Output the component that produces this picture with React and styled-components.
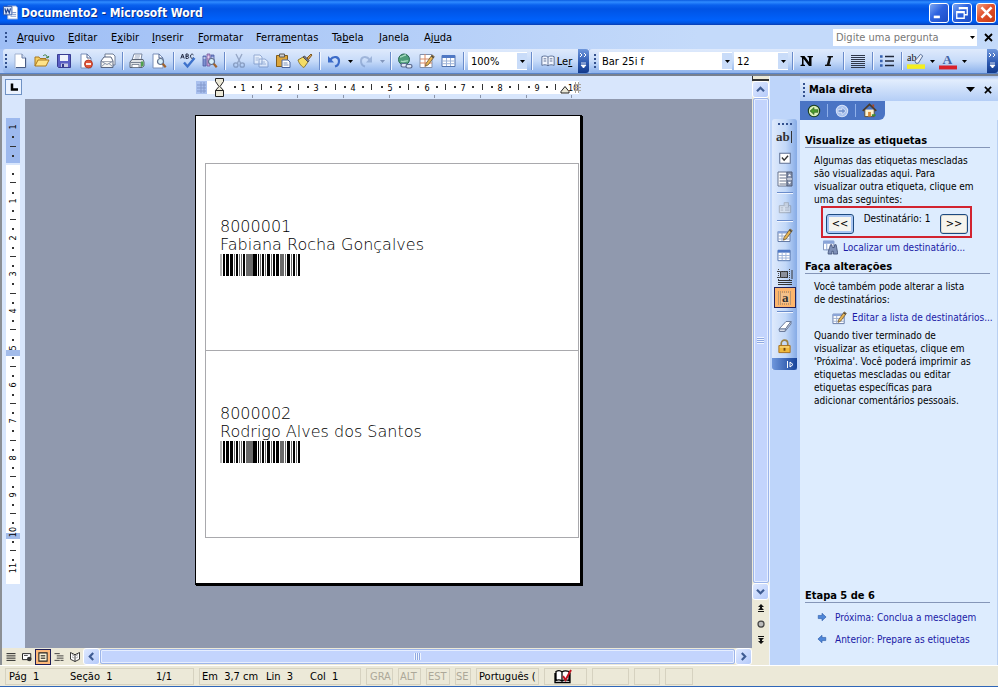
import React from "react";
import styled, { createGlobalStyle } from "styled-components";

const UI = '"DejaVu Sans Condensed", "Noto Sans", sans-serif';

const Global = createGlobalStyle`
  *, *::before, *::after { box-sizing: border-box; }
  html, body, #root { height: 100%; }
  body { margin: 0; background: #fff; font: 11px/13px ${UI}; color: #000; }
  button, input { font: inherit; color: inherit; padding: 0; border: 0; background: none; margin: 0; }
  a { color: #1a1aa6; text-decoration: none; }
  h2, p { margin: 0; }
  svg { display: block; flex: none; }
`;

const Window = styled.main`
  display: flex; flex-direction: column; min-height: 100vh;
  margin-right: 2px; border-bottom: 1px solid #2f66b8; background: #ece9d8; overflow: hidden;
`;
const TitleBar = styled.header`
  display: flex; align-items: center; height: 25px; padding: 0 2px 0 3px; gap: 3px;
  background: linear-gradient(#0a5be0 0, #2f8bff 2px, #0a62ee 5px, #0053e4 9px, #0061fb 20px, #0054e0 23px, #0a3cb0 25px);
`;
const Title = styled.h1`
  flex: 1; margin: 0; color: #fff; font: bold 12px/16px "DejaVu Sans Condensed", "Noto Sans", sans-serif;
  text-shadow: 1px 1px #0a2f8a;
`;
const WinButton = styled.button`
  width: 20px; height: 20px; border: 1px solid #fff; border-radius: 3px; display: grid; place-items: center;
  margin-left: ${(p) => (p.$close ? 1 : 0)}px;
  background: ${(p) => (p.$close
    ? "linear-gradient(135deg, #f0a084, #e2512c 45%, #c63a12)"
    : "linear-gradient(135deg, #7fa8f2, #2c62e0 45%, #1c4cc4)")};
`;
const MenuBar = styled.nav`
  display: flex; align-items: center; height: 24px; padding-left: 5px;
  background: linear-gradient(90deg, #9ebef5, #c4dafa 70%, #c4dafa);
`;
const Grip = styled.span`
  width: 2px; height: ${(p) => p.$h || 14}px; flex: none; margin-right: ${(p) => p.$gap || 0}px;
  background: repeating-linear-gradient(#33518e 0 2px, transparent 2px 4px);
`;
const MenuItem = styled.button`
  width: ${(p) => p.$w}px; text-align: left; flex: none; white-space: nowrap;
  u { text-underline-offset: 1px; }
`;
const Menus = styled.div`display: flex; flex: 1; padding-left: 10px;`;
const Combo = styled.div`
  display: flex; align-items: center; background: #fff; height: ${(p) => p.$h || 18}px;
  ${(p) => (p.$w ? `width: ${p.$w}px; flex: none;` : "flex: 1;")}
  min-width: 0; margin: 0 1px;
  input { flex: 1; min-width: 0; width: 0; padding-left: 3px; outline: 0; }
  input::placeholder { color: #777; opacity: 1; }
`;
const DropButton = styled.button`
  width: ${(p) => p.$w || 10}px; height: ${(p) => p.$h || 16}px; flex: none;
  display: grid; place-items: center; background: ${(p) => (p.$fill ? "#c9dcf9" : "none")};
`;
const PlainButton = styled.button`width: 20px; height: 18px; display: grid; place-items: center;`;

const Bars = styled.div`display: flex; height: 25px; background: #a9c5f5; border-bottom: 1px solid #5a84c8;`;
const Bar = styled.div`
  display: flex; align-items: center; height: 24px; padding-left: ${(p) => (p.$first ? 2 : 5)}px;
  margin-left: ${(p) => (p.$first ? 3 : 0)}px;
  border-radius: 3px 0 0 3px; ${(p) => (p.$grow ? "flex: 1; min-width: 0;" : "flex: none;")}
  background: linear-gradient(#dfeafc, #c7dbf9 50%, #8db2ec);
`;
const ToolButton = styled.button`
  width: ${(p) => p.$w || 22}px; height: 22px; flex: none; display: flex; align-items: center;
  justify-content: center; gap: 2px; opacity: ${(p) => (p.disabled ? 0.5 : 1)};
`;
const Sep = styled.span`
  width: 1px; height: 18px; margin: 0 3px; flex: none; background: #6a8ccb; box-shadow: 1px 0 #f1f6ff;
`;
const BarEnd = styled.button`
  width: 11px; height: 24px; flex: none; display: grid; place-items: center;
  margin-left: ${(p) => (p.$push ? 18 : 0)}px;
  background: linear-gradient(#6f97dc, #2a56ae 60%, #123a8c); border-radius: 0 3px 3px 0;
`;

const Work = styled.div`display: flex; flex: 1; border-top: 2px solid #77808f; min-height: 0;`;
const Editor = styled.section`
  flex: 1; min-width: 0; display: flex; flex-direction: column; border-left: 2px solid #8b8f94; background: #d8e6fc;
`;
const EditorTop = styled.div`display: flex; flex: 1; min-height: 0;`;
const Canvas = styled.div`flex: 1; min-width: 0; display: flex; flex-direction: column;`;
const RulerRow = styled.div`display: flex; height: 23px; background: #d8e6fc;`;
const TabStop = styled.button`
  width: 17px; height: 16px; margin: 3px; border: 1px solid #6f92c4; background: #eaf2ff;
  display: grid; place-items: center; flex: none;
`;
const RulerCenter = styled.div`flex: 1; display: flex; justify-content: center;`;
const CanvasBody = styled.div`display: flex; flex: 1;`;
const VRuler = styled.div`width: 23px; flex: none; padding: 19px 0 0 3px;`;
const Desk = styled.div`
  flex: 1; background: #9099ae; display: flex; justify-content: center; align-items: flex-start; padding: 16px 0;
`;
const Paper = styled.article`
  width: 387px; height: 470px; background: #fff; border: 1px solid #000; border-width: 1px 2px 2px 1px;
  padding: 47px 1px 0 9px; box-shadow: 1px 1px #000;
`;
const LabelTable = styled.table`
  border-collapse: collapse; width: 100%;
  td { border: 1px solid #a9a9ad; height: 187px; padding: 0 14px 20px; vertical-align: middle; }
`;
const LabelText = styled.p`
  font: 200 16px/18px "DejaVu Sans", "DejaVu Sans Light", sans-serif; white-space: nowrap; color: #000;
`;

const VScroll = styled.div`
  width: 17px; flex: none; display: flex; flex-direction: column; align-items: center; background: #ece9d8;
`;
const Split = styled.span`width: 17px; height: 5px; background: #ece9d8; border: 1px solid #333; border-width: 0 0 2px 1px;`;
const Arrow = styled.button`
  width: ${(p) => p.$w || 17}px; height: 17px; flex: none; border: 1px solid #fff; border-radius: 3px;
  background: linear-gradient(135deg, #dfe9ff, #b5cafa); display: grid; place-items: center;
`;
const Thumb = styled.span`
  flex: 1; background: #c3d4fd; border: 1px solid #9db5ea; border-radius: 2px; box-shadow: inset 0 0 0 1px #e6eeff;
  display: grid; place-items: center; ${(p) => (p.$v ? "width: 16px;" : "height: 15px;")}
`;
const Notches = styled.i`
  width: 7px; height: 7px;
  background: repeating-linear-gradient(${(p) => (p.$v ? "180deg" : "90deg")}, #eef4ff 0 1px, #8fa9e2 1px 2px);
`;
const Browse = styled.div`
  height: 48px; display: flex; flex-direction: column; justify-content: space-around; align-items: center; width: 17px;
`;
const TinyButton = styled.button`width: 12px; height: 12px; display: grid; place-items: center;`;
const HScroll = styled.div`display: flex; align-items: center; height: 17px; background: #ece9d8; padding: 0 17px 0 1px;`;
const ViewButton = styled.button`
  width: 16px; height: 16px; flex: none; display: grid; place-items: center;
  ${(p) => p.$on && "background: #fdb97a; box-shadow: 0 0 0 1px #1d1d55 inset;"}
`;

const SideDock = styled.aside`
  width: 31px; flex: none; padding: 43px 3px 0 2px; background: #bed5fa; border-left: 1px solid #eef4ff;
`;
const SideBar = styled.div`
  display: flex; flex-direction: column; align-items: center; border-radius: 3px 3px 0 0;
  background: linear-gradient(90deg, #dfeafc, #c2d8f8 55%, #86abe6);
`;
const SideGrip = styled.span`
  width: 14px; height: 2px; margin: 4px 0 1px; background: repeating-linear-gradient(90deg, #33518e 0 2px, transparent 2px 4px);
`;
const SideButton = styled.button`
  width: 22px; height: 21px; display: grid; place-items: center; flex: none; opacity: ${(p) => (p.disabled ? 0.5 : 1)};
  ${(p) => p.$on && "background: #fdb66d; box-shadow: 0 0 0 1px #23235c inset;"}
`;
const SideSep = styled.span`width: 16px; height: 1px; margin: 3px 0; background: #6a8ccb; box-shadow: 0 1px #f1f6ff;`;
const SideEnd = styled.button`
  width: 100%; height: 12px; display: flex; justify-content: flex-end; align-items: center; padding-right: 3px;
  margin-top: 1px; background: linear-gradient(90deg, #6f97dc, #17439a); border-radius: 0 0 3px 3px;
`;

const Pane = styled.aside`
  width: 198px; flex: none; display: flex; flex-direction: column; background: #ddecfe; overflow: hidden;
`;
const PaneHead = styled.div`
  display: flex; align-items: center; height: 25px; padding: 2px 0 0 3px;
  background: linear-gradient(#a9c5f5, #e2edfd 4px, #b4cef6);
`;
const PaneTitle = styled.h2`flex: 1; font: bold 11px/14px ${UI}; padding-left: 4px;`;
const PaneNav = styled.div`
  display: flex; align-items: center; width: 85px; height: 19px; background: #4a74c4; border-radius: 0 0 6px 0; padding-left: 3px;
`;
const NavButton = styled.button`width: 21px; height: 18px; display: grid; place-items: center;`;
const NavSep = styled.span`width: 1px; height: 13px; margin: 0 3px; background: #8fb0ea;`;
const PaneBody = styled.div`
  flex: 1; display: flex; flex-direction: column; padding: 14px 0 0 5px; border-right: 1px solid #b9d0f2;
  font-size: 10px;
`;
const Heading = styled.h2`
  font: bold 11px/13px ${UI}; border-bottom: 1px solid #8596b8; margin-right: 7px; flex: none;
  margin-top: ${(p) => p.$top || 0}px;
`;
const Text = styled.p`padding-left: 9px; white-space: nowrap; margin-top: ${(p) => p.$top}px;`;
const Highlight = styled.div`
  display: flex; justify-content: space-between; margin: 0 25px 0 16px; height: 32px; padding: 4px 2px 2px 3px;
  border: 2px solid #d2232f;
`;
const Push = styled.button`
  width: 28px; height: 20px; align-self: flex-end; border: 1px solid #1c4a80; border-radius: 3px; background: #f6f5ee;
  font: 11px/16px ${UI}; box-shadow: inset 0 0 0 ${(p) => (p.$focus ? "2px #a9c6f3" : "1px #dedbd0")};
`;
const TaskLink = styled.a`
  display: flex; align-items: center; gap: ${(p) => p.$gap || 5}px; height: ${(p) => p.$h || 18}px; white-space: nowrap; padding-left: ${(p) => p.$left}px;
`;
const Steps = styled.div`margin-top: auto; padding-bottom: 15px;`;
const StepList = styled.div`padding-top: 3px;`;

const Status = styled.footer`
  display: flex; align-items: center; height: 21px; padding: 2px 0 1px 5px; gap: 5px; background: #ece9d8;
  border-top: 1px solid #fff; white-space: nowrap;
`;
const Cell = styled.div`
  width: ${(p) => p.$w}px; height: 17px; border: 1px solid #d6d2c0; flex: none; display: flex; align-items: center;
  padding-left: ${(p) => (p.$pad === undefined ? 3 : p.$pad)}px; color: ${(p) => (p.$off ? "#aca899" : "#000")}; overflow: hidden;
`;
const Field = styled.span`width: ${(p) => p.$w}px; flex: none; white-space: pre;`;

/* ---------- drawings ---------- */
const Ico = ({ children, s = 16 }) => (
  <svg width={s} height={s} viewBox="0 0 16 16" fill="none" aria-hidden="true">{children}</svg>
);
const Down = ({ c = "#000" }) => (
  <svg width="5" height="3" viewBox="0 0 5 3" aria-hidden="true"><path d="M0 0h5L2.500 3z" fill={c} /></svg>
);
const Chevron = ({ r = 0 }) => (
  <svg width="9" height="9" viewBox="0 0 9 9" fill="none" aria-hidden="true">
    <path transform={`rotate(${r} 4.5 4.5)`} d="M1 6.200 4.500 2.800 8 6.200" stroke="#3f5c93" strokeWidth="2.200" />
  </svg>
);
const Cross = ({ c = "#000", s = 9 }) => (
  <svg width={s} height={s} viewBox="0 0 9 9" aria-hidden="true"><path d="M1 1l7 7M8 1 1 8" stroke={c} strokeWidth="1.800" /></svg>
);
const GridArt = () => (
  <>
    <path d="M1 2.500h13v11H1z" fill="#fff" stroke="#5273ad" />
    <path d="M1 2h13v3H1z" fill="#4f78c4" />
    <path d="M5.500 5v8M9.500 5v8M1 8h13M1 10.700h13" stroke="#9db3d8" />
  </>
);
const Pencil = () => (
  <><path d="M7 10.500 13 2l2.300 1.600-6 8.200-2.800 1.400z" fill="#e8b654" stroke="#6b5430" strokeWidth=".8" /><path d="m12.400 3 2.200 1.600" stroke="#444" strokeWidth="1.400" /></>
);
const Lens = () => (
  <><circle cx="9.500" cy="8.500" r="3" fill="#d9f0fb" stroke="#5f6f8c" strokeWidth="1.200" /><path d="m11.700 10.800 3 3.400" stroke="#a0622c" strokeWidth="2.200" /></>
);
const art = {
  word: (<><path d="M5 1h9l1.500 2v12H5z" fill="#fff" stroke="#8ca6d8" /><path d="M10 8h4M10 10h4M8 12h6" stroke="#7d97cc" /><path d="M.5 1.500h9v9h-9z" fill="#dce7fb" stroke="#2f55a4" /><path d="m2 3.500 1.300 5L5 4.500l1.700 4L8 3.500" stroke="#23458f" strokeWidth="1.300" /></>),
  blank: (<><path d="M3 1h7l4 4v10H3z" fill="#fff" stroke="#a3b3d1" /><path d="M10 1v4h4" fill="#cfdcf3" stroke="#6c80a8" /><path d="M13.500 5v9.500H4" stroke="#475c86" /></>),
  open: (<><path d="M1 13V4h4l1 1.500h6V8" fill="#f5cf62" stroke="#a9781f" /><path d="m1 13 3-6h11l-3 6z" fill="#ffe388" stroke="#a9781f" /><path d="M9 3c2-2 4-1 4.500 1.500M12 4l2 1 .8-2" stroke="#3b7a37" /></>),
  save: (<><path d="M1.500 1.500h13v13h-12l-1-1z" fill="#5a5fc4" stroke="#383c92" /><path d="M4 2h8v6H4z" fill="#eef2fb" /><path d="M5 10.500h7V14H5z" fill="#c7cbe4" /><path d="M6 11h2v3H6z" fill="#34388a" /></>),
  perm: (<><path d="M3 1h6l4 4v10H3z" fill="#fff" stroke="#7a8fb8" /><path d="M9 1v4h4" stroke="#516793" /><circle cx="10.500" cy="11" r="4" fill="#e0563a" stroke="#a92d19" strokeWidth=".8" /><path d="M8 11h5" stroke="#fff" strokeWidth="1.800" /></>),
  mail: (<><path d="M5 1h8l2 2v9H5z" fill="#fff" stroke="#6f7c94" /><path d="M1 8h12v6.500H1z" fill="#f4f4f1" stroke="#59657e" /><path d="m1 8 3-4h7l2 4" fill="#fff" stroke="#59657e" /><path d="m1 14 4-3.500M13 14l-4-3.500M1.500 8.500l5.500 3 5.500-3" stroke="#8a95aa" /></>),
  print: (<><path d="M5 1h8l-1 6H3z" fill="#fff" stroke="#7886a0" /><path d="M6 3h5M5.500 5h5" stroke="#9aa8c2" /><path d="m1 9 2-2.500h11L15 9v4l-2 1.500H1z" fill="#dfe3e6" stroke="#5b6576" /><path d="M1.500 9.500H12V14" stroke="#7b8595" /><path d="M3 11.500h7v3H3z" fill="#fff" stroke="#59657a" strokeWidth=".7" /><path d="M12 8.500h2.500v4L12 14z" fill="#4fa04d" /></>),
  preview: (<><path d="M2 1h6l4 4v10H2z" fill="#fff" stroke="#7a8fb8" /><path d="M8 1v4h4" stroke="#516793" /><Lens /></>),
  spell: (<><path d="M.8 5.500 2.500 1l1.700 4.500M1.500 4h2M6 1v4.500h1.500c1.500 0 1.500-2 0-2.200H6h1.300C9 3 8.700 1 7.300 1zM13.500 2c-1-1.500-3-1-3 1.200s2 2.800 3 1.300" stroke="#222b44" /><path d="m4 9.500 3.500 4L14.500 5" stroke="#3d72cc" strokeWidth="2.400" /></>),
  research: (<><path d="M1 3h3v10H1zM9 2h3v8H9z" fill="#7d8fd1" stroke="#4c5ba1" strokeWidth=".8" /><path d="M5 1h3v12H5z" fill="#c9a0d8" stroke="#71589a" strokeWidth=".8" /><path d="M1.500 5h2M5.500 4h2M9.500 5h2" stroke="#fff" /><Lens /></>),
  cut: (<><path d="M5 1 9.500 10M11 1 6.500 10" stroke="#5b6d92" strokeWidth="1.300" /><circle cx="4.800" cy="12" r="2.200" stroke="#5b6d92" strokeWidth="1.300" /><circle cx="11.200" cy="12" r="2.200" stroke="#5b6d92" strokeWidth="1.300" /></>),
  copy: (<><path d="M1 2h6l2 2v7H1zM6 6h6l3 2.500V14H6z" fill="#fff" stroke="#5b77ad" /><path d="M2.500 5H6M2.500 7H5M8 9h4M8 11h5" stroke="#7b93bd" /></>),
  paste: (<><path d="M1.500 2.500h11v11h-11z" fill="#dca63c" stroke="#815c1c" /><path d="M4.500 1h5v3h-5z" fill="#ccc" stroke="#595959" /><path d="M7 7h6l2 2v5.500H7z" fill="#fff" stroke="#4b66a0" /><path d="M8.500 10h4M8.500 12h5" stroke="#7b93bd" /></>),
  brush: (<><path d="m1 7 5-3 5 5-4 5.500c-2-.5-5-4-6-7.500z" fill="#f4dc65" stroke="#8c7730" /><path d="m6 4 5 5 1-1.500-4.500-4.500z" fill="#7c7c86" stroke="#4d4d55" /><path d="m10 5 4-4 1 1-3.500 4.500z" fill="#d9a252" stroke="#7d5922" /></>),
  undo: (<><path d="M4 7c4-5 9-3 9 1 0 3-2 5-4 5.500" stroke="#3b6bc8" strokeWidth="2.200" /><path d="M2 3v6.500h6z" fill="#3b6bc8" /></>),
  redo: (<><path d="M12 7C8 2 3 4 3 8c0 3 2 5 4 5.500" stroke="#718cbc" strokeWidth="2" /><path d="M14 3v6.500H8z" fill="#718cbc" /></>),
  link: (<><circle cx="7" cy="6.500" r="5.500" fill="#4f9d7a" stroke="#2c6a55" /><path d="M3 4c3 0 3-2 6-2M4 8c2 2 5-1 7 0" stroke="#a8dcc0" strokeWidth="1.400" /><rect x="4" y="10.500" width="6" height="3.500" rx="1.700" fill="#dfe7f5" stroke="#5c6b8f" strokeWidth="1.200" /><rect x="9" y="11.500" width="6" height="3.500" rx="1.700" fill="#dfe7f5" stroke="#5c6b8f" strokeWidth="1.200" /></>),
  draw: (<><path d="M1 1.500h12v13H1z" fill="#fff" stroke="#8290ac" /><path d="M1 6h12M1 10h12M6 1v13" stroke="#d88a64" /><Pencil /></>),
  table: <GridArt />,
  read: (<><path d="M8 3.500C6 2 3.500 2 1 3v10c2.500-1 5-1 7 .5 2-1.500 4.500-1.500 7-.5V3c-2.500-1-5-1-7 .5z" fill="#f2f6ff" stroke="#51658c" /><path d="M8 3.500v10M3 5.500h3M3 8h3M10 5.500h3M10 8h3" stroke="#51658c" /></>),
  bold: <path d="M1.500 3h4l4.500 6V4.500L8.500 4V3H14v1l-1.500.5V13H10L4.500 5.800V11.500L6 12v1H1.500v-1L3 11.500V4.500L1.500 4z" fill="#000" />,
  italic: <path d="M6.500 3H12v1.200l-1.800.3L8.500 11.500l1.500.3V13H4v-1.200l1.800-.3L7.700 4.500l-1.500-.3z" fill="#111" />,
  justify: <path d="M1 2.500h14M1 4.500h14M1 6.500h14M1 8.500h14M1 10.500h14M1 12.500h14M1 14.500h14" stroke="#30384a" strokeWidth="1" />,
  bullets: (<><path d="M6 3.500h9M6 8h9M6 12.500h9" stroke="#20283a" strokeWidth="1.300" /><path d="M1 2.200h2.600v2.600H1zM1 6.700h2.600v2.600H1zM1 11.200h2.600v2.600H1z" fill="#3661b0" /></>),
  smart: (<><path d="M1.500 6.500h13v8h-13z" fill="#e6e6e6" stroke="#777" /><path d="M3 9h3M3 11.500h3M8 9h5M8 11.500h5" stroke="#888" /><path d="M7 6V3h5v5" fill="#ccc" stroke="#888" /></>),
  check: (<><path d="M2 2.500h12v11.500H2z" fill="#fff" stroke="#5d6f92" strokeWidth="1.200" /><path d="m4.500 7.500 2.500 3 4.500-5" stroke="#333" strokeWidth="1.600" /></>),
  list: (<><path d="M1 1h9v14H1z" fill="#fff" stroke="#66728c" /><path d="M2.500 4H9M2.500 7H9M2.500 10H9M2.500 13H9" stroke="#66728c" /><path d="M10 1h5v14h-5z" fill="#8a96b0" stroke="#4f5b75" /><path d="m11 5 1.500-2L14 5zM11 11l1.500 2L14 11z" fill="#fff" /><path d="M10 8h5" stroke="#fff" /></>),
  edit: (<><path d="M1 4.500h12v10H1z" fill="#fff" stroke="#6379a5" /><path d="M1 4h12v2.500H1z" fill="#8ba5d8" /><path d="M1 9h12M1 12h12M5 6v8" stroke="#9badce" /><Pencil /></>),
  frame: (<><path d="M3.500 2.500h7v6h-7z" fill="#8a8f9a" stroke="#333" /><path d="M1.500 0v11M12.500 0v11M0 2.500h14M0 8.500h14" stroke="#444" strokeDasharray="1 1" /><path d="M1 11.500h14M1 13.500h14M1 15.500h14M15 1v9" stroke="#333" /></>),
  shade: <path d="M1 2h14M1 4h14M1 6h14M1 8h14M1 10h14M1 12h14M1 14h14" stroke="#7b7672" strokeDasharray="1 1" />,
  eraser: (<><path d="m2 11 7-7.500h5L8.500 11z" fill="#fff" stroke="#6c7c9c" /><path d="m2 11 .5 2.500h5.500l.5-2.500zM8.500 11 14 3.500V6l-6 7.500" fill="#d6dce8" stroke="#6c7c9c" /></>),
  lock: (<><path d="M4.500 8V5c0-5 7-5 7 0v3" stroke="#9c8243" strokeWidth="1.800" /><path d="M2 7h12v7.500H2z" fill="#f0b93b" stroke="#a56e1c" /><path d="M3 8.500h10" stroke="#ffe69a" /><path d="M8 9.500v3" stroke="#70460d" strokeWidth="2" /></>),
  back: (<><circle cx="8" cy="8" r="6.500" fill="#d9efb9" stroke="#173c1b" strokeWidth="1.200" /><path d="M3.500 8 8 4v2.500h4.500v3H8V12z" fill="#4b9b2b" stroke="#245b18" strokeWidth=".7" /></>),
  fwd: (<><circle cx="8" cy="8" r="6.500" fill="#a9c2ee" stroke="#d6e2f9" strokeWidth="1.200" /><path d="M12.500 8 8 4v2.500H3.500v3H8V12z" fill="#7595d0" stroke="#eaf1ff" strokeWidth=".8" /></>),
  home: (<><path d="M3 7v7.500h10V7" fill="#fff4d0" stroke="#5b4c32" /><path d="m.8 8.500 7.200-7 7.200 7" stroke="#4c3a26" strokeWidth="1.800" /><path d="M11 1.500h2V5l-2-2z" fill="#b14725" /><path d="M6.500 9.500h3v5h-3z" fill="#d98a36" /><path d="M10.500 13h4" stroke="#3c8e34" strokeWidth="2" /></>),
  find: (<><path d="M.5 1.500h11v9H.5z" fill="#fff" stroke="#7b8fb9" /><path d="M.5 1h11v2.500H.5zM4 4v7" fill="#8ba5d8" stroke="#8ba5d8" /><path d="m7 8 1-3h1.500l.5 3h2l.5-3H14l1.500 8v2H11v-3H9.500v3H5.500v-2z" fill="#7f91b8" stroke="#35466d" strokeWidth=".8" /></>),
  right: <path d="M2 5.500h6V2l6.500 6L8 14v-3.500H2z" fill="#4e86d8" stroke="#2c5ba8" />,
  left: <path d="M14 5.500H8V2L1.500 8 8 14v-3.500h6z" fill="#4e86d8" stroke="#2c5ba8" />,
  vNormal: <path d="M2 3.500h12M2 6.500h12M2 9.500h12M2 12.500h12" stroke="#222" strokeWidth="1.300" />,
  vWeb: (<><path d="M2 3.500h11v8H2z" fill="#fff" stroke="#222" strokeWidth="1.300" /><circle cx="11" cy="10.500" r="3" fill="#333" /><path d="M4 6h5" stroke="#222" /></>),
  vPrint: (<><path d="M2.500 2.500h11v11h-11z" fill="#fff5d8" stroke="#222" strokeWidth="1.400" /><path d="M5 6h6M5 8h6M5 10h6" stroke="#222" /></>),
  vOutline: <path d="M2 3.500h7M5 6.500h9M5 9.500h9M2 12.500h7M10 12.500h4" stroke="#333" strokeWidth="1.200" />,
  vRead: (<><path d="M8 5 2 2v9l6 3 6-3V2zM8 5v9" fill="#fff" stroke="#222" strokeWidth="1.200" /><path d="m4.500 5 1.500 1M4.500 8l1.500 1M10 6l1.500-1M10 9l1.500-1" stroke="#222" /></>),
};
const A = ({ n, s }) => <Ico s={s}>{art[n]}</Ico>;

const HighlightIcon = () => (
  <Ico s={18}><text x="0" y="8" fontSize="9" fontFamily="Liberation Serif, serif" fill="#111">ab</text><path d="m7 8 5-6 2 1.500-4 6.500H8z" fill="#e8edf7" stroke="#4e658e" strokeWidth=".8" /><path d="M0 11h16v4H0z" fill="#f4ee21" /></Ico>
);
const FontColorIcon = () => (
  <Ico s={18}><text x="3" y="11" fontSize="12" fontFamily="Liberation Serif, serif" fontWeight="bold" fill="#4263a5">A</text><path d="M0 12h16v3.500H0z" fill="#d9202a" /></Ico>
);
const EndMark = () => (
  <svg width="9" height="18" viewBox="0 0 9 18" aria-hidden="true"><path d="M1 1l2 2-2 2M5 1l2 2-2 2" stroke="#fff" fill="none" /><path d="M2 11h5M2 13h5L4.500 16z" stroke="#fff" strokeWidth=".8" fill="#fff" /></svg>
);
const Jump = ({ up }) => (
  <svg width="6" height="8" viewBox="0 0 6 8" aria-hidden="true"><path transform={up ? undefined : "rotate(180 3 4)"} d="M3 0l3 3H4v1l2 2H0l2-2V3H0zM0 7h6v1H0z" fill="#111" /></svg>
);
const Spelling = () => (
  <svg width="18" height="15" viewBox="0 0 18 15" fill="none" aria-hidden="true">
    <path d="M8 3C6 1 4 1.500 2 2.500v9c2-1 4-1 6 .5 2-1.500 4-1.500 7-.5V2.500C12 1.500 10 1.500 8 3zM8 3v9M1 4v9.500h15V4" stroke="#000" strokeWidth="1.300" fill="#fff" /><path d="m9 7 2.500 4L17 1" stroke="#c01623" strokeWidth="2" />
  </svg>
);

const STEP = 36.75;
const Ticks = ({ from, to, at }) => {
  const out = [];
  for (let q = from; q <= to; q += 1) {
    if (q % 4 === 0) continue;
    const p = at(q);
    const half = q % 4 === 2 || q % 4 === -2;
    out.push(<rect key={q} x={p} y={half ? 8 : 10} width={half ? 1 : 2} height={half ? 6 : 2} fill="#333" />);
  }
  return out;
};
const HorizontalRuler = () => (
  <svg width="387" height="23" aria-label="Régua horizontal">
    <rect x="12" y="5" width="372" height="13" fill="#fff" />
    <rect x="1" y="5" width="11" height="13" fill="#a9c0ee" />
    <path d="M6 6v11M9 6v11M2 9h9M2 12h9M2 15h9" stroke="#8399cc" />
    <Ticks from={3} to={38} at={(q) => Math.round(11 + (q * STEP) / 4)} />
    {[1, 2, 3, 4, 5, 6, 7, 8, 9].map((n) => (
      <text key={n} x={Math.round(11 + n * STEP)} y="15" fontSize="9" textAnchor="middle">{n}</text>
    ))}
    <text x="373" y="15" fontSize="9">10</text>
    <path d="M380.500 6v11M383.500 6v11M379 8.500h7M379 11.500h7M379 14.500h7" stroke="#aaa49b" />
    {[57, 102, 148, 194, 239, 285, 331, 376].map((x) => <rect key={x} x={x} y="19" width="1" height="3" fill="#8a94a8" />)}
    <path d="M20.500 2.500h8v3l-3.500 5 3.500 4v6h-8v-6l3.500-4-3.500-5zM20.500 14.500h8" fill="#ece9d8" stroke="#222" />
    <path d="M366 15.500 370 10.500l4 5v1.500h-8z" fill="#ece9d8" stroke="#222" />
  </svg>
);
const VerticalRuler = () => (
  <svg width="15" height="466" aria-label="Régua vertical">
    <rect x="1" y="0" width="14" height="45" fill="#9db9ee" />
    <rect x="1" y="47" width="14" height="419" fill="#fff" />
    <g transform="matrix(0 1 1 0 -3 0)"><Ticks from={-3} to={44} at={(q) => Math.round(46 + (q * STEP) / 4)} /></g>
    <rect x="1" y="232" width="14" height="6" fill="#a3bcea" />
    <rect x="1" y="415" width="14" height="6" fill="#a3bcea" />
    {[-1, 1, 2, 3, 4, 5, 6, 7, 8, 9, 10, 11].map((n) => {
      const y = Math.round(46 + n * STEP);
      return <text key={n} x="11" y={y} fontSize="9" textAnchor="middle" transform={`rotate(-90 11 ${y})`}>{Math.abs(n)}</text>;
    })}
  </svg>
);

const INK = ["#000", "#6a6a6a", "#b4b4b4"];
const BARS = [
  [0, 2, 2], [3, 2, 0], [6, 3, 0], [10, 3, 0], [14, 1, 1], [16, 2, 0], [19, 1, 1], [21, 1, 1], [23, 2, 0], [26, 7, 1],
  [33, 4, 0], [38, 1, 0], [40, 1, 1], [42, 2, 0], [45, 1, 1], [47, 3, 0], [51, 1, 1], [53, 2, 0], [56, 3, 0],
  [60, 4, 1], [65, 1, 1], [67, 3, 0], [71, 1, 1], [73, 2, 0], [76, 1, 1], [78, 2, 0],
];
const Barcode = () => (
  <svg width="81" height="22" role="img" aria-label="Código de barras">
    {BARS.map(([x, w, c]) => <rect key={x} x={x} width={w} height="22" fill={INK[c]} />)}
  </svg>
);

/* ---------- parts ---------- */
const menus = [
  ["", "A", "rquivo", 51], ["", "E", "ditar", 43], ["E", "x", "ibir", 41], ["", "I", "nserir", 46], ["", "F", "ormatar", 58],
  ["Ferra", "m", "entas", 76], ["Ta", "b", "ela", 47], ["", "J", "anela", 45], ["Aj", "u", "da", 40],
];
const Tool = ({ n, label, disabled }) => <ToolButton aria-label={label} disabled={disabled}><A n={n} /></ToolButton>;
const ComboBox = ({ label, value, w, h, placeholder, fill = true }) => (
  <Combo $w={w} $h={h}>
    <input aria-label={label} defaultValue={value} placeholder={placeholder} />
    <DropButton $fill={fill} aria-label={`Abrir ${label}`}><Down /></DropButton>
  </Combo>
);
const Label = ({ code, name }) => (
  <tr><td><LabelText>{code}</LabelText><LabelText>{name}</LabelText><Barcode /></td></tr>
);

export default function App() {
  return (
    <Window>
      <Global />
      <TitleBar>
        <A n="word" s={15} />
        <Title>Documento2 - Microsoft Word</Title>
        <WinButton aria-label="Minimizar"><Ico s={14}><path d="M2 12.500h7" stroke="#fff" strokeWidth="3" /></Ico></WinButton>
        <WinButton aria-label="Restaurar"><Ico s={14}><path d="M5 4V2h9v8h-3M5 3h9M2 6.500h8.500V14H2zM2 7.500h8" stroke="#fff" strokeWidth="1.500" /></Ico></WinButton>
        <WinButton $close aria-label="Fechar"><Cross c="#fff" s={13} /></WinButton>
      </TitleBar>
      <MenuBar>
        <Grip $h={10} />
        <Menus>
          {menus.map(([a, u, b, w]) => <MenuItem key={a + u + b} $w={w}>{a}<u>{u}</u>{b}</MenuItem>)}
        </Menus>
        <ComboBox label="pergunta" placeholder="Digite uma pergunta" w={144} h={17} fill={false} />
        <PlainButton aria-label="Fechar documento"><Cross /></PlainButton>
      </MenuBar>
      <Bars>
        <Bar $first>
          <Grip $gap={2} />
          <Tool n="blank" label="Novo" /><Tool n="open" label="Abrir" /><Tool n="save" label="Salvar" />
          <Tool n="perm" label="Permissão" /><Tool n="mail" label="Email" /><Sep />
          <Tool n="print" label="Imprimir" /><Tool n="preview" label="Visualizar" /><Sep />
          <Tool n="spell" label="Ortografia" /><Tool n="research" label="Pesquisar" /><Sep />
          <Tool n="cut" label="Recortar" disabled /><Tool n="copy" label="Copiar" disabled />
          <Tool n="paste" label="Colar" /><Tool n="brush" label="Pincel" /><Sep />
          <Tool n="undo" label="Desfazer" /><DropButton aria-label="Lista desfazer"><Down /></DropButton>
          <Tool n="redo" label="Refazer" disabled /><DropButton aria-label="Lista refazer"><Down c="#8397bd" /></DropButton><Sep />
          <Tool n="link" label="Hiperlink" /><Tool n="draw" label="Tabelas e bordas" /><Tool n="table" label="Inserir tabela" /><Sep />
          <ComboBox label="zoom" value="100%" w={59} /><Sep />
          <ToolButton $w={43}><A n="read" s={14} /><span>Le<u>r</u></span></ToolButton>
          <BarEnd aria-label="Opções da barra"><EndMark /></BarEnd>
        </Bar>
        <Bar $grow>
          <Grip $gap={2} />
          <ComboBox label="fonte" value="Bar 25i f" />
          <ComboBox label="tamanho" value="12" w={54} />
          <Sep />
          <Tool n="bold" label="Negrito" /><Tool n="italic" label="Itálico" /><Sep />
          <Tool n="justify" label="Justificar" /><Sep /><Tool n="bullets" label="Marcadores" /><Sep />
          <ToolButton aria-label="Realce"><HighlightIcon /></ToolButton><DropButton aria-label="Cor do realce"><Down /></DropButton>
          <ToolButton aria-label="Cor da fonte"><FontColorIcon /></ToolButton><DropButton aria-label="Lista de cores"><Down /></DropButton>
          <BarEnd $push aria-label="Opções de formatação"><EndMark /></BarEnd>
        </Bar>
      </Bars>

      <Work>
        <Editor>
          <EditorTop>
            <Canvas>
              <RulerRow>
                <TabStop aria-label="Tabulação"><Ico s={8}><path d="M4 1v12h12" stroke="#000" strokeWidth="5" /></Ico></TabStop>
                <RulerCenter><HorizontalRuler /></RulerCenter>
              </RulerRow>
              <CanvasBody>
                <VRuler><VerticalRuler /></VRuler>
                <Desk>
                  <Paper>
                    <LabelTable><tbody>
                      <Label code="8000001" name="Fabiana Rocha Gonçalves" />
                      <Label code="8000002" name="Rodrigo Alves dos Santos" />
                    </tbody></LabelTable>
                  </Paper>
                </Desk>
              </CanvasBody>
            </Canvas>
            <VScroll>
              <Split />
              <Arrow aria-label="Para cima"><Chevron /></Arrow>
              <Thumb $v><Notches $v /></Thumb>
              <Arrow aria-label="Para baixo"><Chevron r={180} /></Arrow>
              <Browse>
                <TinyButton aria-label="Página anterior"><Jump up /></TinyButton>
                <TinyButton aria-label="Selecionar objeto"><Ico s={8}><circle cx="8" cy="8" r="6" fill="#bbb" stroke="#444" strokeWidth="2.500" /></Ico></TinyButton>
                <TinyButton aria-label="Próxima página"><Jump /></TinyButton>
              </Browse>
            </VScroll>
          </EditorTop>
          <HScroll>
            <ViewButton aria-label="Normal"><A n="vNormal" s={12} /></ViewButton>
            <ViewButton aria-label="Web"><A n="vWeb" s={12} /></ViewButton>
            <ViewButton $on aria-label="Impressão"><A n="vPrint" s={12} /></ViewButton>
            <ViewButton aria-label="Tópicos"><A n="vOutline" s={12} /></ViewButton>
            <ViewButton aria-label="Leitura"><A n="vRead" s={12} /></ViewButton>
            <Arrow aria-label="Esquerda"><Chevron r={-90} /></Arrow>
            <Thumb><Notches /></Thumb>
            <Arrow aria-label="Direita"><Chevron r={90} /></Arrow>
          </HScroll>
        </Editor>

        <SideDock>
          <SideBar>
            <SideGrip />
            <SideButton aria-label="Campo de texto"><svg width="18" height="16" aria-hidden="true"><text x="0" y="12" fontSize="13" fontWeight="bold" fontFamily="Liberation Serif, serif" fill="#333">ab</text><path d="M15.500 2v12" stroke="#333" /></svg></SideButton>
            <SideButton aria-label="Caixa de seleção"><A n="check" s={14} /></SideButton>
            <SideButton aria-label="Lista suspensa"><A n="list" /></SideButton>
            <SideSep />
            <SideButton disabled aria-label="Opções do campo"><A n="smart" s={14} /></SideButton>
            <SideSep />
            <SideButton aria-label="Desenhar tabela"><A n="edit" /></SideButton>
            <SideButton aria-label="Inserir tabela"><A n="table" s={15} /></SideButton>
            <SideButton aria-label="Inserir quadro"><A n="frame" /></SideButton>
            <SideButton $on aria-label="Sombreamento"><svg width="16" height="16" viewBox="0 0 16 16" aria-hidden="true">{art.shade}<rect x="4" y="3" width="8" height="10" fill="#f3c18c" /><text x="5" y="12" fontSize="13" fontWeight="bold" fontFamily="Liberation Serif, serif" fill="#333">a</text></svg></SideButton>
            <SideSep />
            <SideButton aria-label="Redefinir"><A n="eraser" /></SideButton>
            <SideButton aria-label="Proteger"><A n="lock" s={15} /></SideButton>
            <SideEnd aria-label="Mais botões"><svg width="8" height="7" aria-hidden="true"><path d="M1.500 0v7M4 1l3 2.500L4 6z" stroke="#fff" fill="none" /></svg></SideEnd>
          </SideBar>
        </SideDock>

        <Pane>
          <PaneHead>
            <Grip $h={14} /><PaneTitle>Mala direta</PaneTitle>
            <DropButton $w={16} aria-label="Outros painéis"><svg width="9" height="5" aria-hidden="true"><path d="M0 0h9L4.500 5z" /></svg></DropButton>
            <PlainButton aria-label="Fechar painel"><Cross s={8} /></PlainButton>
          </PaneHead>
          <PaneNav>
            <NavButton aria-label="Voltar"><A n="back" s={14} /></NavButton><NavSep />
            <NavButton aria-label="Avançar"><A n="fwd" s={14} /></NavButton><NavSep />
            <NavButton aria-label="Início"><A n="home" s={15} /></NavButton>
          </PaneNav>
          <PaneBody>
            <Heading>Visualize as etiquetas</Heading>
            <Text $top={6}>Algumas das etiquetas mescladas<br />são visualizadas aqui. Para<br />visualizar outra etiqueta, clique em<br />uma das seguintes:</Text>
            <Highlight><Push $focus>&lt;&lt;</Push><span>Destinatário: 1</span><Push>&gt;&gt;</Push></Highlight>
            <TaskLink href="#localizar" $left={18}><A n="find" s={15} />Localizar um destinatário...</TaskLink>
            <Heading $top={4}>Faça alterações</Heading>
            <Text $top={6}>Você também pode alterar a lista<br />de destinatários:</Text>
            <TaskLink href="#editar" $left={27} $h={22}><A n="edit" s={15} />Editar a lista de destinatários...</TaskLink>
            <Text $top={1}>Quando tiver terminado de<br />visualizar as etiquetas, clique em<br />'Próxima'. Você poderá imprimir as<br />etiquetas mescladas ou editar<br />etiquetas específicas para<br />adicionar comentários pessoais.</Text>
            <Steps>
              <Heading>Etapa 5 de 6</Heading>
              <StepList>
                <TaskLink href="#proxima" $left={12} $gap={8} $h={22}><A n="right" s={10} />Próxima: Conclua a mesclagem</TaskLink>
                <TaskLink href="#anterior" $left={12} $gap={8} $h={22}><A n="left" s={10} />Anterior: Prepare as etiquetas</TaskLink>
              </StepList>
            </Steps>
          </PaneBody>
        </Pane>
      </Work>

      <Status>
        <Cell $w={189}><Field $w={61}>{"Pág  1"}</Field><Field $w={86}>{"Seção  1"}</Field><span>1/1</span></Cell>
        <Cell $w={162} $pad={2}><Field $w={64}>{"Em  3,7 cm"}</Field><Field $w={44}>{"Lin  3"}</Field><Field $w={40}>{"Col  1"}</Field></Cell>
        <Cell $w={27} $off>GRA</Cell><Cell $w={23} $off $pad={1}>ALT</Cell><Cell $w={24} $off $pad={1}>EST</Cell><Cell $w={16} $off $pad={0}>SE</Cell>
        <Cell $w={63} $pad={2}>Português (</Cell><Cell $w={43} $pad={9}><Spelling /></Cell>
        <Cell $w={37} /><Cell $w={26} /><Cell $w={28} />
      </Status>
    </Window>
  );
}
